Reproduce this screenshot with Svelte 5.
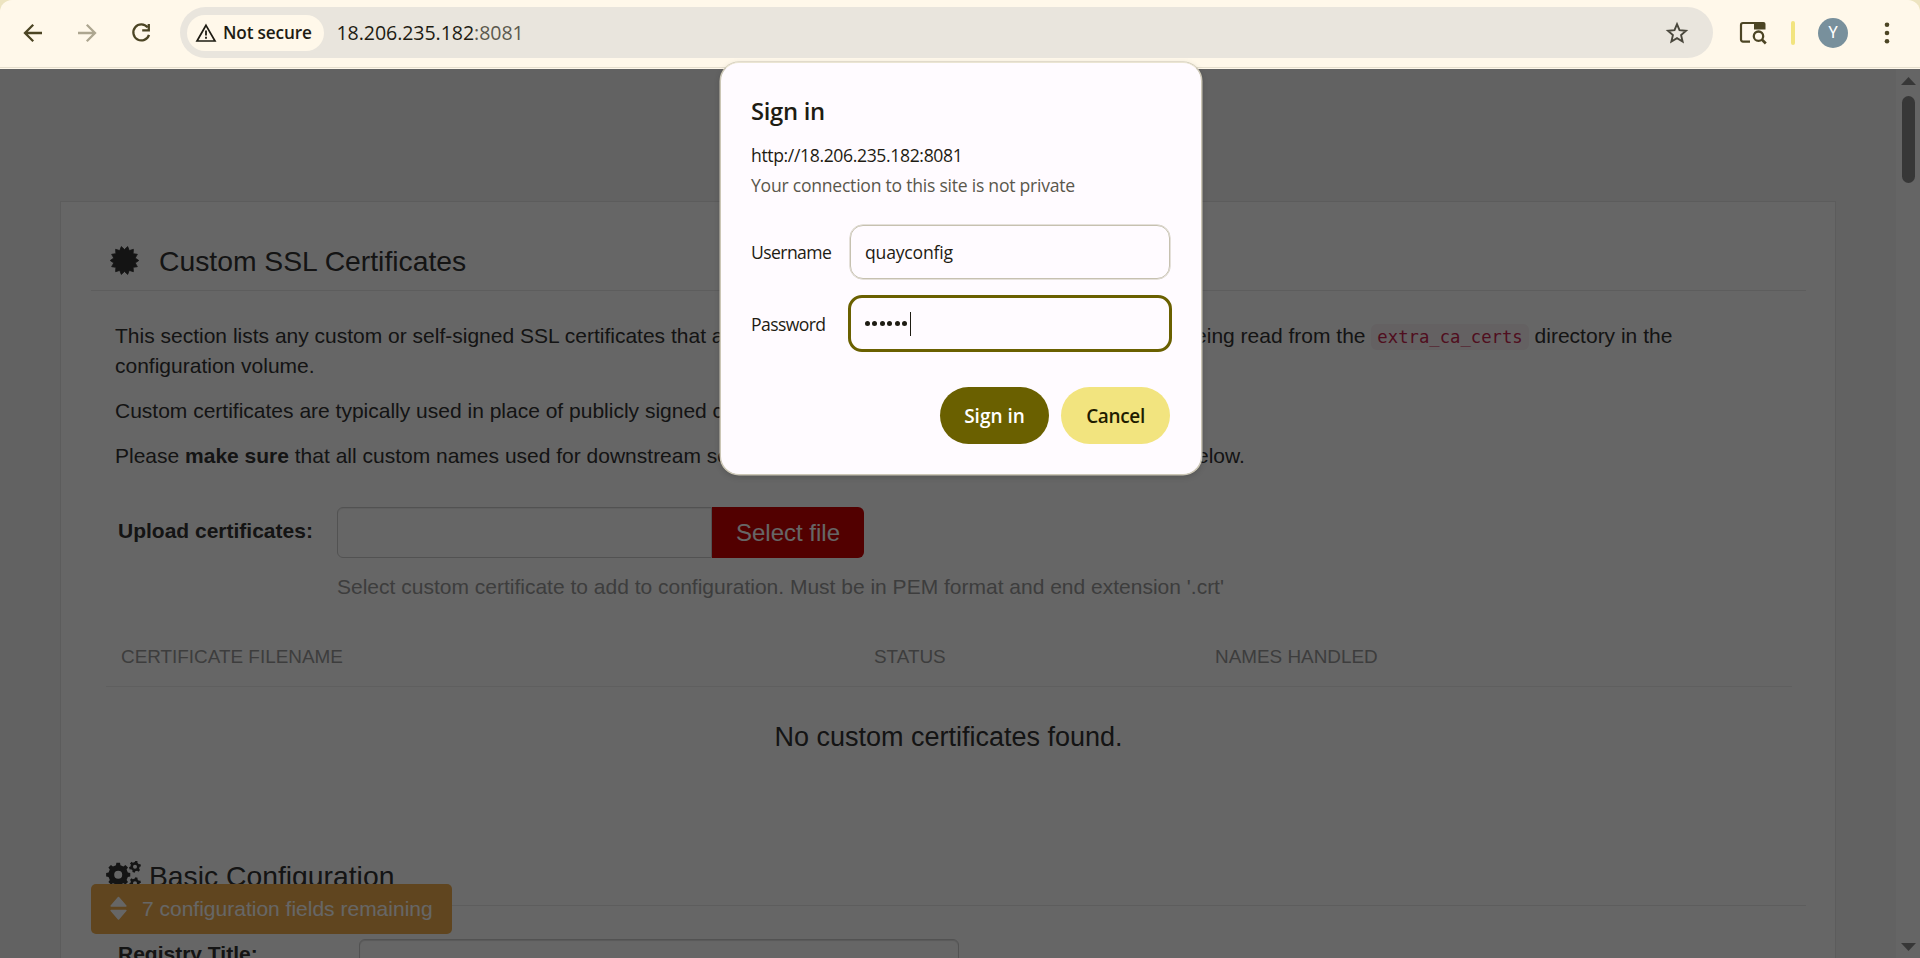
<script>
  const columns = ['Certificate Filename', 'Status', 'Names Handled'];
  const dots = [0, 1, 2, 3, 4, 5];

  // Pointed seal for the certificate section
  const seal = Array.from({ length: 28 }, (_, i) => {
    const r = i % 2 ? 14.3 : 11;
    const a = (Math.PI * i) / 14;
    return `${(14.5 + r * Math.sin(a)).toFixed(2)},${(14.5 - r * Math.cos(a)).toFixed(2)}`;
  }).join(' ');

  function gear(cx, cy, outer, inner, hole, teeth, turn = 0) {
    const pts = [];
    const step = (Math.PI * 2) / teeth;
    for (let i = 0; i < teeth; i++) {
      const a = i * step + turn;
      for (const [f, r] of [[-0.29, inner], [-0.19, outer], [0.19, outer], [0.29, inner]]) {
        pts.push(`${(cx + r * Math.sin(a + f * step)).toFixed(2)} ${(cy - r * Math.cos(a + f * step)).toFixed(2)}`);
      }
    }
    return `M${pts.join('L')}ZM${cx - hole} ${cy}a${hole} ${hole} 0 1 0 ${hole * 2} 0a${hole} ${hole} 0 1 0 ${-hole * 2} 0Z`;
  }
  const gears = gear(12.2, 13.8, 12.2, 9.9, 4, 8) + gear(29, 5.7, 6, 4.6, 2, 6, 0.25) + gear(29, 22.2, 6, 4.6, 2, 6, 0.25);
</script>

<div class="window">
  <header class="toolbar">
    <nav class="nav">
      <svg width="24" height="24" viewBox="0 0 24 24"><path d="M21 12H4.5M12.2 3.8 4 12l8.2 8.2" /></svg>
      <svg class="off" width="24" height="24" viewBox="0 0 24 24"><path d="M3 12h16.5M11.8 3.8 20 12l-8.2 8.2" /></svg>
      <svg width="24" height="24" viewBox="0 0 24 24"><path d="M18.6 6.4A8 8 0 1 0 20 13.8M19.8 3v6.3h-6.6" /></svg>
    </nav>
    <div class="address">
      <div class="chip">
        <svg width="22" height="20" viewBox="0 0 22 20"><path d="M11 2.3 20 18H2Z" fill="none" stroke="#1e1c13" stroke-width="1.7" /><path d="M11 7.6v4.8M11 13.8v2" stroke="#1e1c13" stroke-width="1.8" /></svg>
        <span>Not secure</span>
      </div>
      <div class="url">18.206.235.182<span>:8081</span></div>
      <svg class="star" width="24" height="24" viewBox="0 0 24 24"><path d="m12 3.2 2.5 6 6.5.6-4.9 4.3 1.5 6.4-5.6-3.4-5.6 3.4 1.5-6.4L3 9.8l6.5-.6Z" fill="none" stroke="#49473c" stroke-width="1.9" /></svg>
    </div>
    <div class="tools">
      <svg width="28" height="24" viewBox="0 0 28 24"><path d="M11 20.6H4a2 2 0 0 1-2-2V4a2 2 0 0 1 2-2h20" fill="none" stroke="#4c4524" stroke-width="2.2" /><path d="M15 1h9.5a2 2 0 0 1 2 2v5.4H15Z" fill="#4c4524" /><circle cx="19.5" cy="15.2" r="4.7" fill="none" stroke="#4c4524" stroke-width="2.3" /><path d="m22.8 18.5 4 4" stroke="#4c4524" stroke-width="2.6" /></svg>
      <i class="divider"></i>
      <span class="avatar">Y</span>
      <svg class="more" width="6" height="24" viewBox="0 0 6 24" fill="#4c4524"><circle cx="3" cy="3.7" r="2.3" /><circle cx="3" cy="12" r="2.3" /><circle cx="3" cy="20.3" r="2.3" /></svg>
    </div>
  </header>

  <div class="viewport">
    <main class="page">
      <section class="panel">
        <h2 class="ssl"><svg width="29" height="29" viewBox="0 0 29 29"><polygon points={seal} fill="#333" stroke="#333" stroke-width=".8" stroke-linejoin="round" /></svg><span>Custom SSL Certificates</span></h2>
        <div class="copy">
          <p>This section lists any custom or self-signed SSL certificates that are installed in the Quay container on startup after being read from the <code>extra_ca_certs</code> directory in the configuration volume.</p>
          <p>Custom certificates are typically used in place of publicly signed certificates for corporate-internal services.</p>
          <p>Please <strong>make sure</strong> that all custom names used for downstream services (such as Clair) are listed in the certificates below.</p>
        </div>
        <div class="upload">
          <label for="cert">Upload certificates:</label>
          <div>
            <div class="picker"><input id="cert" readonly /><button>Select file</button></div>
            <div class="help">Select custom certificate to add to configuration. Must be in PEM format and end extension '.crt'</div>
          </div>
        </div>
        <div class="thead">{#each columns as c}<span>{c}</span>{/each}</div>
        <div class="empty">No custom certificates found.</div>
        <h2 class="basic"><svg width="36" height="29" viewBox="0 0 36 29"><path d={gears} fill="#333" fill-rule="evenodd" /></svg><span>Basic Configuration</span></h2>
        <div class="field"><label for="title">Registry Title:</label><input id="title" /></div>
      </section>
    </main>
    <aside class="scrollbar">
      <svg width="15" height="8" viewBox="0 0 15 8"><path d="M0 8 7.5 0 15 8Z" fill="#8b8b8b" /></svg>
      <i class="thumb"></i>
      <svg class="down" width="15" height="8" viewBox="0 0 15 8"><path d="M0 0 7.5 8 15 0Z" fill="#8b8b8b" /></svg>
    </aside>
    <div class="remaining">
      <svg width="17" height="24" viewBox="0 0 17 24"><path d="M1.2 10 8.5 1.6l7.3 8.4ZM1.2 14.6l7.3 8.4 7.3-8.4Z" fill="#fff" stroke="#fff" stroke-width="1.6" stroke-linejoin="round" /></svg>
      <span>7 configuration fields remaining</span>
    </div>
    <div class="shade"></div>
  </div>

  <div class="dialog">
    <h1>Sign in</h1>
    <p class="origin">http://18.206.235.182:8081</p>
    <p class="warn">Your connection to this site is not private</p>
    <div class="row"><span class="lab">Username</span><div class="box"><span>quayconfig</span></div></div>
    <div class="row second"><span class="lab">Password</span><div class="box focus">{#each dots as d (d)}<i class="dot"></i>{/each}<i class="caret"></i></div></div>
    <div class="actions"><button class="primary">Sign in</button><button>Cancel</button></div>
  </div>
</div>

<style>
  :global(body) { margin: 0; overflow: hidden; }
  * { box-sizing: border-box; }
  svg { display: block; flex: none; }
  .window { position: relative; width: 1920px; height: 958px; overflow: hidden; background: #ede4c0; font-family: "Open Sans", "Noto Sans", sans-serif; color: #1e1c13; display: flex; flex-direction: column; }
  .toolbar { height: 69px; flex: none; display: flex; align-items: flex-start; background: #fff8ea; border-radius: 12px 12px 0 0; box-shadow: inset 0 -1px #fff8ea, inset 0 -2px #e6dfce; padding-top: 7px; }
  .nav { display: flex; gap: 30px; width: 180px; padding: 14px 0 0 21px; }
  .nav path { fill: none; stroke: #4c4524; stroke-width: 2.3; }
  .nav .off { opacity: .45; }
  .address { width: 1533px; height: 51px; border-radius: 26px; background: #e9e5dd; display: flex; align-items: center; padding: 0 24px 0 7px; }
  .chip { width: 137px; height: 36px; border-radius: 18px; background: #fff8ea; display: flex; align-items: center; gap: 6px; padding-left: 8px; font-size: 17.2px; font-weight: 600; letter-spacing: -.15px; white-space: nowrap; }
  .url { margin-left: 12.5px; font-size: 19.6px; letter-spacing: -.08px; line-height: 28px; }
  .url span { color: #5c594e; }
  .star { margin-left: auto; }
  .tools { flex: 1; display: flex; align-items: center; height: 51px; padding-left: 26px; }
  .divider { width: 4px; height: 24px; border-radius: 2px; background: #f2e47f; margin-left: 24px; }
  .avatar { width: 30px; height: 30px; border-radius: 50%; background: #78909c; color: #fff; font: 16px/30px Roboto, sans-serif; text-align: center; margin-left: 23px; }
  .more { margin-left: 36px; }

  .viewport { position: relative; flex: 1; display: flex; min-height: 0; }
  .page { flex: 1; background: #f6f6f6; padding: 132px 60px 0; overflow: hidden; font-family: "Liberation Sans", Arial, sans-serif; color: #333; font-size: 21px; line-height: 30px; }
  .panel { background: #fff; border: 1px solid #e6e6e6; height: 900px; padding: 29px 29px 0 30px; }
  h2 { margin: 0; font-weight: 400; font-size: 28.3px; line-height: 30px; border-bottom: 1px solid #e9e9e9; display: flex; height: 60px; align-items: flex-start; }
  .ssl { padding: 15px 0 0 19px; gap: 20px; }
  .copy { padding: 30px 100px 0 24px; }
  .copy p { margin: 0 0 15px; }
  code { font: 17.26px "DejaVu Sans Mono", monospace; color: #c7254e; background: #f9f2f4; border-radius: 6px; padding: 3px 6px; }
  .upload { display: flex; padding: 21px 0 0 27px; }
  .upload label { width: 219px; font-weight: 700; padding-top: 9px; }
  .picker { display: flex; height: 51px; }
  .picker input { width: 375px; border: 1px solid #ccc; border-radius: 6px 0 0 6px; background: #fff; box-shadow: inset 0 1px 1px #eee; }
  .picker button { width: 152px; border: 0; border-radius: 0 6px 6px 0; background: #cc0000; color: #fff; font: 24px "Liberation Sans", Arial, sans-serif; padding: 0; }
  .help { color: #999; margin-top: 14px; white-space: nowrap; }
  .thead { display: grid; grid-template-columns: 753px 341px 1fr; margin: 26px 14px 0 15px; height: 59px; padding: 14px 0 0 15px; border-bottom: 1px solid #ededed; text-transform: uppercase; color: #999; font-size: 18.9px; }
  .empty { text-align: center; font-size: 27px; line-height: 40px; padding-top: 30px; height: 159px; color: #333; }
  .basic { gap: 7px; padding: 15px 0 0 15px; }
  .field { display: flex; padding: 33px 0 0 27px; }
  .field label { width: 241px; font-weight: 700; line-height: 30px; }
  .field input { width: 600px; height: 51px; border: 1px solid #ccc; border-radius: 6px; box-shadow: inset 0 1px 1px #ddd; }
  .scrollbar { width: 24px; background: #fcfcfc; display: flex; flex-direction: column; align-items: center; padding: 8px 0 7px; }
  .thumb { width: 13px; height: 87px; border-radius: 7px; background: #8b8b8b; margin-top: 11px; }
  .down { margin-top: auto; }
  .remaining { position: absolute; left: 91px; top: 815px; width: 361px; height: 50px; border-radius: 5px; background: #f0ad4e; color: #fff; display: flex; align-items: center; padding-left: 19px; gap: 15px; font: 21px/30px "Liberation Sans", Arial, sans-serif; white-space: nowrap; }
  .remaining svg { margin-top: -3px; }
  .shade { position: absolute; inset: 0; background: rgba(0, 0, 0, .6); }

  .dialog { position: absolute; left: 720px; top: 62px; width: 482px; height: 413px; border: 1px solid #cbc6b5; border-top-color: #ebe5d3; border-radius: 19px; background: #fffbff; padding: 32px 30px 0; font-size: 17.6px; box-shadow: 0 0 0 .5px #cbc6b5, 0 2px 6px rgba(0, 0, 0, .16); }
  h1 { margin: 0; font-size: 23.8px; line-height: 32px; font-weight: 600; letter-spacing: -.3px; }
  .dialog p { margin: 0; line-height: 30px; white-space: nowrap; }
  .dialog .origin { padding-top: 13px; letter-spacing: -.37px; }
  .dialog .warn { color: #5a574c; letter-spacing: -.25px; }
  .row { display: flex; align-items: center; height: 55px; margin-top: 24px; }
  .second { height: 57px; margin-top: 16px; }
  .lab { width: 99px; flex: none; letter-spacing: -.6px; }
  .box { width: 320px; height: 54px; border: 1px solid #c6c1b0; box-shadow: 0 0 0 .5px #cbc6b5; border-radius: 13px; padding-left: 14px; display: flex; align-items: center; letter-spacing: -.2px; }
  .focus { width: 324px; height: 57px; flex: none; margin: 0 -2px; border: 3px solid #6a6000; border-radius: 14px; gap: 2.4px; box-shadow: none; }
  .dot { width: 5px; height: 5px; border-radius: 50%; background: #1e1c13; }
  .caret { width: 1px; height: 24px; background: #1e1c13; margin-left: 1px; }
  .actions { display: flex; justify-content: flex-end; gap: 12px; margin: 35px 1px 0 0; }
  .actions button { width: 109px; height: 57px; border: 0; border-radius: 29px; background: #f2e47f; color: #1f1c00; font: 600 19px "Open Sans", sans-serif; letter-spacing: -.35px; padding: 0; }
  .actions .primary { background: #6a6000; color: #fff; letter-spacing: 0; }
</style>
